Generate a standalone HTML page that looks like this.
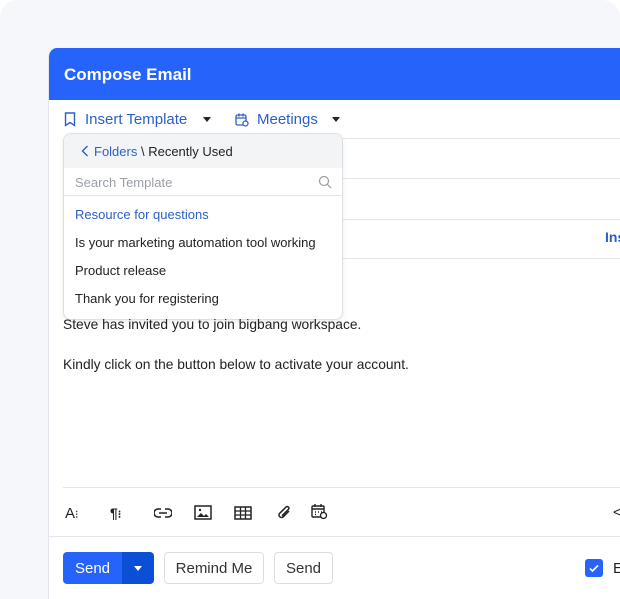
<!DOCTYPE html>
<html><head><style>
*{box-sizing:border-box;margin:0;padding:0}
html,body{width:620px;height:599px;overflow:hidden}
body{background:#fff;font-family:"Liberation Sans",sans-serif;position:relative}
.bg{position:absolute;left:0;top:0;width:620px;height:599px;background:#f5f7fb;border-radius:18px 18px 0 0}
.card{position:absolute;left:48px;top:48px;width:572px;height:551px;background:#fff;border-radius:9px 0 0 0;border-left:1px solid #e3e6ec;overflow:hidden}
.hdr{height:52px;background:#2563fb;color:#fff;font-size:17px;font-weight:bold;padding:17px 0 0 15px}
.line{position:absolute;left:15px;right:0;height:1px;background:#e4e6ea}
.tb{position:absolute;top:111px;font-size:15px;color:#2b5fc9;display:flex;align-items:center}
.caret{width:0;height:0;border-left:4.5px solid transparent;border-right:4.5px solid transparent;border-top:5px solid #222;display:inline-block}
.dd{position:absolute;left:63px;top:133px;width:280px;height:187px;background:#fff;border:1px solid #dcdfe4;border-radius:8px;box-shadow:0 2px 6px rgba(0,0,0,.08);overflow:hidden;font-size:13px;color:#222}
.dd .top{background:#f3f4f6;padding:0 0 0 17px;display:flex;align-items:center;height:34px}
.dd .srch{height:28px;border-bottom:1px solid #e4e6ea;padding:7px 0 0 11px;color:#9a9ea6;position:relative}
.dd .it{position:absolute;left:11px}
.body{position:absolute;left:63px;font-size:13.8px;color:#222}
.btn{position:absolute;top:552px;height:32px;border:1px solid #dadde2;border-radius:4px;background:#fff;font-size:15px;color:#333;display:flex;align-items:center;justify-content:center}
</style></head><body>
<div class="bg"></div>
<div class="card"><div class="hdr">Compose Email</div></div>
<div class="line" style="top:138px;left:343px"></div>
<div class="line" style="top:178px;left:343px"></div>
<div class="line" style="top:219px;left:63px"></div>
<div class="line" style="top:258px;left:343px"></div>
<div style="position:absolute;left:605px;top:229px;font-size:14px;color:#2b5fc9;font-weight:bold">Ins</div>
<div class="tb" style="left:64px">
<svg width="12" height="15" viewBox="0 0 12 15" style="margin-right:9px"><path d="M1.5 1h9v12.5L6 10.5 1.5 13.5z" fill="none" stroke="#2b5fc9" stroke-width="1.4"/></svg>
<span>Insert Template</span><span class="caret" style="margin-left:16px"></span></div>
<div class="tb" style="left:235px">
<svg width="14" height="14" viewBox="0 0 14 14" style="margin-right:8px"><rect x="1" y="2" width="10" height="10" rx="1.5" fill="none" stroke="#2b5fc9" stroke-width="1.3"/><path d="M1 5h10M4 .5v3M8 .5v3" stroke="#2b5fc9" stroke-width="1.3"/><circle cx="10.5" cy="10.5" r="2.5" fill="#fff" stroke="#2b5fc9" stroke-width="1.2"/></svg>
<span>Meetings</span><span class="caret" style="margin-left:14px"></span></div>
<div class="dd">
<div class="top"><svg width="8" height="12" viewBox="0 0 8 12" style="margin-right:5px"><path d="M6.5 1L1.5 6l5 5" fill="none" stroke="#2b5fc9" stroke-width="1.4"/></svg><span style="color:#2b5fc9">Folders</span>&nbsp;\ Recently Used</div>
<div class="srch">Search Template
<svg width="14" height="14" viewBox="0 0 14 14" style="position:absolute;right:10px;top:7px"><circle cx="6" cy="6" r="4.5" fill="none" stroke="#9a9ea6" stroke-width="1.2"/><path d="M9.3 9.3L13 13" stroke="#9a9ea6" stroke-width="1.2"/></svg></div>
<div class="it" style="top:73px;color:#2b5fc9">Resource for questions</div>
<div class="it" style="top:101px">Is your marketing automation tool working</div>
<div class="it" style="top:129px">Product release</div>
<div class="it" style="top:157px">Thank you for registering</div>
</div>
<div class="body" style="top:317px">Steve has invited you to join bigbang workspace.</div>
<div class="body" style="top:357px">Kindly click on the button below to activate your account.</div>
<div class="line" style="top:487px;left:63px"></div>
<div class="line" style="top:536px;left:48px"></div>
<div style="position:absolute;top:505px;left:65px;font-size:15px;color:#222">A<span style="font-size:11px">⁝</span></div>
<div style="position:absolute;top:505px;left:110px;font-size:14px;color:#222;font-weight:bold">¶<span style="font-size:11px">⁝</span></div>
<svg style="position:absolute;left:154px;top:507px" width="18" height="12" viewBox="0 0 18 12"><path d="M7 2H4a4 4 0 000 8h3M11 2h3a4 4 0 010 8h-3M5 6h8" fill="none" stroke="#222" stroke-width="1.6"/></svg>
<svg style="position:absolute;left:194px;top:505px" width="18" height="15" viewBox="0 0 18 15"><rect x="1" y="1" width="16" height="13" fill="none" stroke="#222" stroke-width="1.5"/><path d="M3 12l4-4 3 3 2-2 3 3z" fill="#222"/><circle cx="6" cy="5" r="1.2" fill="#222"/></svg>
<svg style="position:absolute;left:234px;top:506px" width="18" height="14" viewBox="0 0 18 14"><rect x="1" y="1" width="16" height="12" fill="none" stroke="#222" stroke-width="1.5"/><path d="M1 5h16M1 9h16M6.5 1v12M11.5 1v12" stroke="#222" stroke-width="1.3"/></svg>
<svg style="position:absolute;left:276px;top:505px" width="16" height="16" viewBox="0 0 16 16"><path d="M13 6l-6 6a2.5 2.5 0 01-3.5-3.5L10 2a1.7 1.7 0 012.4 2.4L6 10.8" fill="none" stroke="#222" stroke-width="1.5"/></svg>
<svg style="position:absolute;left:311px;top:503px" width="17" height="17" viewBox="0 0 17 17"><rect x="1" y="3" width="12" height="11" rx="1" fill="none" stroke="#222" stroke-width="1.4"/><path d="M4 1v3M10 1v3M1 6h12M4 9h1M7 9h1M10 9h1M4 11.5h1" stroke="#222" stroke-width="1.4"/><circle cx="12.5" cy="12.5" r="3" fill="#fff" stroke="#222" stroke-width="1.3"/></svg>
<div style="position:absolute;left:613px;top:504px;font-size:15px;color:#222">&lt;</div>
<div style="position:absolute;left:63px;top:552px;width:91px;height:32px;border-radius:4px;overflow:hidden;display:flex">
<div style="width:59px;background:#2563fb;color:#fff;font-size:15px;display:flex;align-items:center;justify-content:center">Send</div>
<div style="width:32px;background:#0b4fd6;display:flex;align-items:center;justify-content:center"><span class="caret" style="border-top-color:#fff"></span></div></div>
<div class="btn" style="left:164px;width:100px">Remind Me</div>
<div class="btn" style="left:274px;width:59px">Send</div>
<div style="position:absolute;left:585px;top:559px;width:18px;height:18px;border-radius:3px;background:#2563fb"><svg width="18" height="18" viewBox="0 0 18 18"><path d="M5 9.5l2.5 2.5L13 6.5" fill="none" stroke="#fff" stroke-width="1.6"/></svg></div>
<div style="position:absolute;left:613px;top:560px;font-size:15px;color:#222">E</div>
</body></html>
